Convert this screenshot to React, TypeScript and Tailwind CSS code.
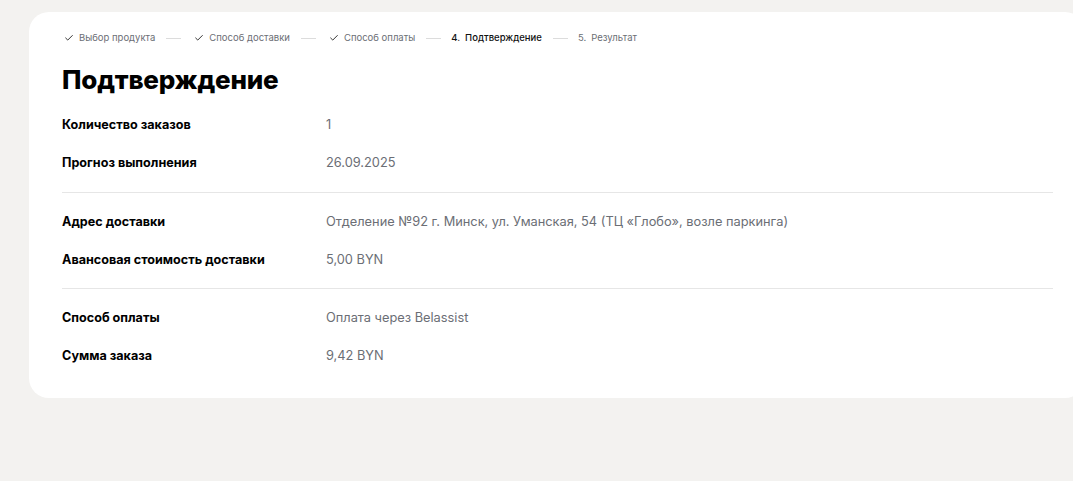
import { Check } from "lucide-react";

type Step = { label: string; done?: boolean; active?: boolean; num?: number };

const steps: Step[] = [
  { label: "Выбор продукта", done: true },
  { label: "Способ доставки", done: true },
  { label: "Способ оплаты", done: true },
  { label: "Подтверждение", active: true, num: 4 },
  { label: "Результат", num: 5 },
];

const sections: [string, string][][] = [
  [
    ["Количество заказов", "1"],
    ["Прогноз выполнения", "26.09.2025"],
  ],
  [
    ["Адрес доставки", "Отделение №92 г. Минск, ул. Уманская, 54 (ТЦ «Глобо», возле паркинга)"],
    ["Авансовая стоимость доставки", "5,00 BYN"],
  ],
  [
    ["Способ оплаты", "Оплата через Belassist"],
    ["Сумма заказа", "9,42 BYN"],
  ],
];

export default function App() {
  return (
    <div className="h-[481px] w-[1073px] overflow-hidden bg-[#f3f2f0] pt-[12px] font-['Inter',sans-serif]">
      <div className="ml-[29px] w-[1056px] rounded-[20px] bg-white pb-[13px] pl-[33px] pr-[32px] pt-[18px]">
        {/* Stepper */}
        <div className="flex h-[16px] items-center pl-[2px] text-[9.5px]">
          {steps.map((s, i) => (
            <div key={s.label} className="flex items-center">
              <div
                className={`flex items-center gap-[5px] ${
                  s.active ? "font-medium text-[#111]" : "text-[#6b6e75]"
                }`}
              >
                {s.done && <Check className="size-[10px] text-[#222]" strokeWidth={2.2} />}
                {s.num && <span>{s.num}.</span>}
                <span>{s.label}</span>
              </div>
              {i < steps.length - 1 && (
                <div
                  className={`ml-[11px] h-px w-[15px] bg-[#dcdcdc] ${
                    steps[i + 1].done ? "mr-[13px]" : "mr-[10px]"
                  }`}
                />
              )}
            </div>
          ))}
        </div>

        <h1 className="mt-[18px] text-[26px] font-extrabold leading-[32px] tracking-[-0.2px] text-black">
          Подтверждение
        </h1>

        <div>
          {sections.map((rows, i) => (
            <div
              key={i}
              className={`${i === 1 ? "pb-[9px] pt-[10px]" : "py-[10px]"} ${
                i < sections.length - 1 ? "border-b border-[#e6e6e6]" : ""
              }`}
            >
              {rows.map(([label, value]) => (
                <div key={label} className="flex h-[38px] items-center">
                  <div className="w-[264px] shrink-0 text-[12.6px] font-bold text-black">{label}</div>
                  <div className="text-[12.8px] text-[#6b6e75]">{value}</div>
                </div>
              ))}
            </div>
          ))}
        </div>
      </div>
    </div>
  );
}
